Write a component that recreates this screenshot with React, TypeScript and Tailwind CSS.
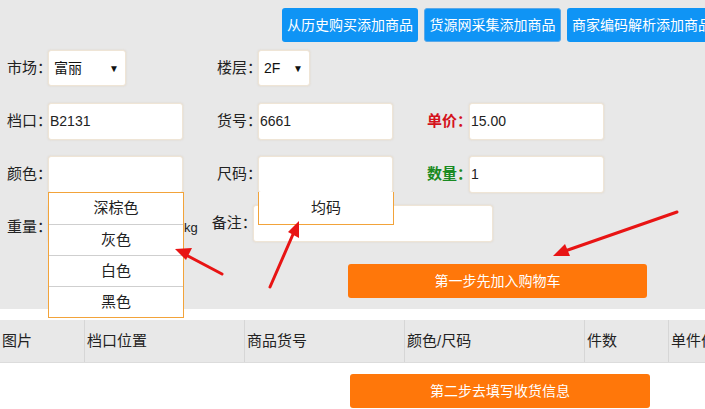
import React from 'react';

const font = { fontFamily: '"Liberation Sans", "Noto Sans CJK SC", sans-serif' };

function Field({ value = '', w = 'w-[135px]' }: { value?: string; w?: string }) {
  return (
    <div
      className={`${w} h-[37px] bg-white rounded-[3px] border border-[#efe5d6] shadow-[0_0_2px_rgba(200,170,120,0.35)] flex items-center pl-[1px] text-[14px] text-[#222]`}
    >
      {value}
    </div>
  );
}

function Select({ value, w }: { value: string; w: string }) {
  return (
    <div
      className={`${w} h-[36px] bg-white rounded-[3px] border border-[#efe5d6] shadow-[0_0_2px_rgba(200,170,120,0.35)] flex items-center justify-between pl-[5px] pr-[6px] text-[14px] text-[#111]`}
    >
      <span>{value}</span>
      <span className="text-[10px]">▼</span>
    </div>
  );
}

function Label({ text, className = 'w-[41px]', tone = 'text-[#222]' }: { text: string; className?: string; tone?: string }) {
  return <span className={`${className} ${tone} text-[15px] shrink-0 whitespace-nowrap`}>{text}</span>;
}

const cols = [
  { name: '图片', w: 'w-[84px]' },
  { name: '档口位置', w: 'w-[160px]' },
  { name: '商品货号', w: 'w-[160px]' },
  { name: '颜色/尺码', w: 'w-[180px]' },
  { name: '件数', w: 'w-[84px]' },
  { name: '单件价格', w: 'w-[80px]' },
];

export default function App() {
  return (
    <div className="relative w-[705px] h-[409px] overflow-hidden bg-white" style={font}>
      {/* top form area */}
      <div className="h-[309px] bg-[#e8e8e8] pt-[8px]">
        <div className="flex gap-[6px] pl-[282px] whitespace-nowrap">
          <button className="w-[136px] h-[34px] shrink-0 rounded-[3px] bg-[#0f94f5] text-white text-[14px]">从历史购买添加商品</button>
          <button className="w-[137px] h-[34px] shrink-0 rounded-[3px] bg-[#0f94f5] text-white text-[14px] border border-[#5aa8e8]">货源网采集添加商品</button>
          <button className="w-[150px] h-[34px] shrink-0 rounded-[3px] bg-[#0f94f5] text-white text-[14px] text-left pl-[5px]">商家编码解析添加商品</button>
        </div>

        <div className="flex items-center pl-[7px] mt-[8px]">
          <Label text="市场：" />
          <Select value="富丽" w="w-[78px]" />
          <Label text="楼层：" className="w-[41px] ml-[91px]" />
          <Select value="2F" w="w-[52px]" />
        </div>

        <div className="flex items-center pl-[7px] mt-[17px]">
          <Label text="档口：" />
          <Field value="B2131" />
          <Label text="货号：" className="w-[41px] ml-[34px]" />
          <Field value="6661" />
          <Label text="单价：" className="w-[42px] ml-[34px] font-bold" tone="text-[#d4121c]" />
          <Field value="15.00" />
        </div>

        <div className="flex items-center pl-[7px] mt-[16px]">
          <Label text="颜色：" />
          <Field />
          <Label text="尺码：" className="w-[41px] ml-[34px]" />
          <Field />
          <Label text="数量：" className="w-[42px] ml-[34px] font-bold" tone="text-[#1a8a22]" />
          <Field value="1" />
        </div>

        <div className="flex items-center pl-[7px] mt-[12px]">
          <Label text="重量：" className="w-[41px] mt-[8px]" />
          <Field />
          <span className="text-[13px] text-[#222] mt-[8px] ml-[1px]">kg</span>
          <Label text="备注：" className="w-[41px] ml-[14px]" />
          <Field w="w-[240px]" />
        </div>

        <div className="pl-[348px] mt-[22px]">
          <button className="w-[299px] h-[34px] rounded-[3px] bg-[#ff770a] text-white text-[14px]">第一步先加入购物车</button>
        </div>
      </div>

      {/* cart table */}
      <div className="mt-[11px] flex h-[43px] bg-[#e8e8e8] border-b border-[#dcdcdc] whitespace-nowrap">
        {cols.map((c, i) => (
          <div
            key={c.name}
            className={`${c.w} shrink-0 flex items-center pl-[2px] text-[15px] text-[#222] ${i > 0 ? 'border-l border-[#d6d6d6]' : ''}`}
          >
            {c.name}
          </div>
        ))}
      </div>
      <div className="pl-[350px] mt-[11px]">
        <button className="w-[300px] h-[34px] rounded-[3px] bg-[#ff770a] text-white text-[14px]">第二步去填写收货信息</button>
      </div>

      {/* open dropdowns */}
      <div className="absolute left-[48px] top-[192px] w-[136px] bg-white border border-[#f2a33a] text-[15px] text-[#222]">
        {['深棕色', '灰色', '白色', '黑色'].map((t, i) => (
          <div key={t} className={`h-[31px] flex items-center justify-center ${i > 0 ? 'border-t border-[#cfcfcf]' : ''}`}>
            {t}
          </div>
        ))}
      </div>
      <div className="absolute left-[258px] top-[192px] w-[136px] h-[33px] bg-white border border-[#f2a33a] border-t-0 flex items-center justify-center text-[15px] text-[#222]">
        均码
      </div>

      {/* annotation arrows */}
      <svg className="absolute left-0 top-0 pointer-events-none" width="705" height="409">
        <g stroke="#e81414" strokeWidth="3" strokeLinecap="round">
          <line x1="222" y1="274" x2="186" y2="255" />
          <line x1="270" y1="287" x2="294" y2="232" />
          <line x1="677" y1="212" x2="565" y2="251" />
        </g>
        <g fill="#e81414">
          <polygon points="175,249 192,248 186,260" />
          <polygon points="299,221 299,238 288,232" />
          <polygon points="553,256 565,244 570,256" />
        </g>
      </svg>
    </div>
  );
}
